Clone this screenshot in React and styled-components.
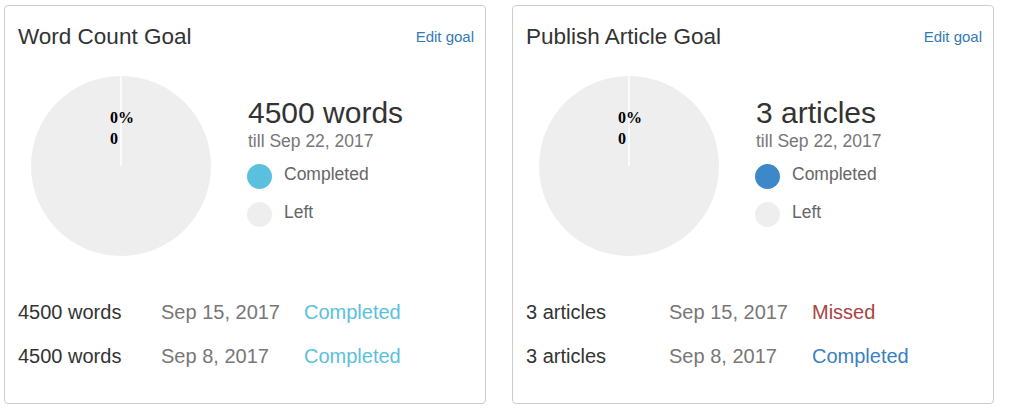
import React from "react";
import styled, { createGlobalStyle } from "styled-components";

const GlobalStyle = createGlobalStyle`
  body {
    margin: 0;
    background: #fff;
    font-family: "Liberation Sans", Arial, Helvetica, sans-serif;
    color: #333;
  }
`;

const Page = styled.div`
  display: flex;
  gap: 26px;
  padding: 5px 4px;
`;

const Panel = styled.section`
  box-sizing: border-box;
  width: 482px;
  height: 399px;
  border: 1px solid #cccccc;
  border-radius: 4px;
  padding: 0 11px 0 13px;
  display: flex;
  flex-direction: column;
`;

const Header = styled.div`
  height: 62px;
  display: flex;
  align-items: center;
  justify-content: space-between;
`;

const Title = styled.h3`
  margin: 0;
  font-size: 22.5px;
  font-weight: normal;
  color: #333;
  line-height: 26px;
`;

const EditLink = styled.a`
  font-size: 15px;
  color: #337ab7;
  text-decoration: none;
  line-height: 18px;
  cursor: pointer;
`;

const Body = styled.div`
  margin-top: 8px;
  height: 180px;
  display: flex;
`;

const PieWrap = styled.div`
  width: 180px;
  height: 180px;
  margin-left: 13px;
  flex-shrink: 0;
`;

const Summary = styled.div`
  margin-left: 37px;
  padding-top: 20px;
  display: flex;
  flex-direction: column;
`;

const Amount = styled.div`
  font-size: 30px;
  line-height: 33px;
  color: #333;
`;

const Until = styled.div`
  margin-top: 2px;
  font-size: 17.5px;
  line-height: 20px;
  color: #777;
`;

const Legend = styled.div`
  margin-top: 13px;
  display: flex;
  flex-direction: column;
  gap: 13px;
`;

const LegendItem = styled.div`
  display: flex;
  align-items: flex-start;
  height: 25px;
  margin-left: -1px;
`;

const Dot = styled.span`
  width: 25px;
  height: 25px;
  border-radius: 50%;
  background: ${(p) => p.color};
  flex-shrink: 0;
`;

const LegendLabel = styled.span`
  margin-left: 12px;
  font-size: 17.5px;
  line-height: 20px;
  color: #666;
`;

const History = styled.div`
  margin-top: 44px;
  display: flex;
  flex-direction: column;
  gap: 20px;
`;

const HistoryRow = styled.div`
  display: grid;
  grid-template-columns: 143px 143px auto;
  font-size: 20px;
  line-height: 24px;
`;

const Cell = styled.span`
  color: ${(p) => p.color || "#333"};
  white-space: nowrap;
`;

const statusColors = {
  info: "#5bc0de",
  primary: "#3a80c2",
  danger: "#a94442",
};

const PieLabel = styled.text`
  font-family: "Liberation Serif", "Times New Roman", serif;
  font-weight: bold;
  font-size: 16px;
  fill: #000;
`;

const Pie = () => (
  <svg width="180" height="180" viewBox="0 0 180 180">
    <circle cx="90" cy="90" r="90" fill="#eeeeee" />
    <line x1="90" y1="0" x2="90" y2="90" stroke="#fff" strokeWidth="1.5" />
    <PieLabel x="79" y="47">
      0%
    </PieLabel>
    <PieLabel x="79" y="68">
      0
    </PieLabel>
  </svg>
);

const GoalCard = ({ title, amount, dotColor, history }) => (
  <Panel>
    <Header>
      <Title>{title}</Title>
      <EditLink>Edit goal</EditLink>
    </Header>
    <Body>
      <PieWrap>
        <Pie />
      </PieWrap>
      <Summary>
        <Amount>{amount}</Amount>
        <Until>till Sep 22, 2017</Until>
        <Legend>
          <LegendItem>
            <Dot color={dotColor} />
            <LegendLabel>Completed</LegendLabel>
          </LegendItem>
          <LegendItem>
            <Dot color="#eeeeee" />
            <LegendLabel>Left</LegendLabel>
          </LegendItem>
        </Legend>
      </Summary>
    </Body>
    <History>
      {history.map((h) => (
        <HistoryRow key={h.date}>
          <Cell>{amount}</Cell>
          <Cell color="#777">{h.date}</Cell>
          <Cell color={statusColors[h.kind]}>{h.status}</Cell>
        </HistoryRow>
      ))}
    </History>
  </Panel>
);

const App = () => (
  <>
    <GlobalStyle />
    <Page>
      <GoalCard
        title="Word Count Goal"
        amount="4500 words"
        dotColor="#5bc0de"
        history={[
          { date: "Sep 15, 2017", status: "Completed", kind: "info" },
          { date: "Sep 8, 2017", status: "Completed", kind: "info" },
        ]}
      />
      <GoalCard
        title="Publish Article Goal"
        amount="3 articles"
        dotColor="#3d88c9"
        history={[
          { date: "Sep 15, 2017", status: "Missed", kind: "danger" },
          { date: "Sep 8, 2017", status: "Completed", kind: "primary" },
        ]}
      />
    </Page>
  </>
);

export default App;
